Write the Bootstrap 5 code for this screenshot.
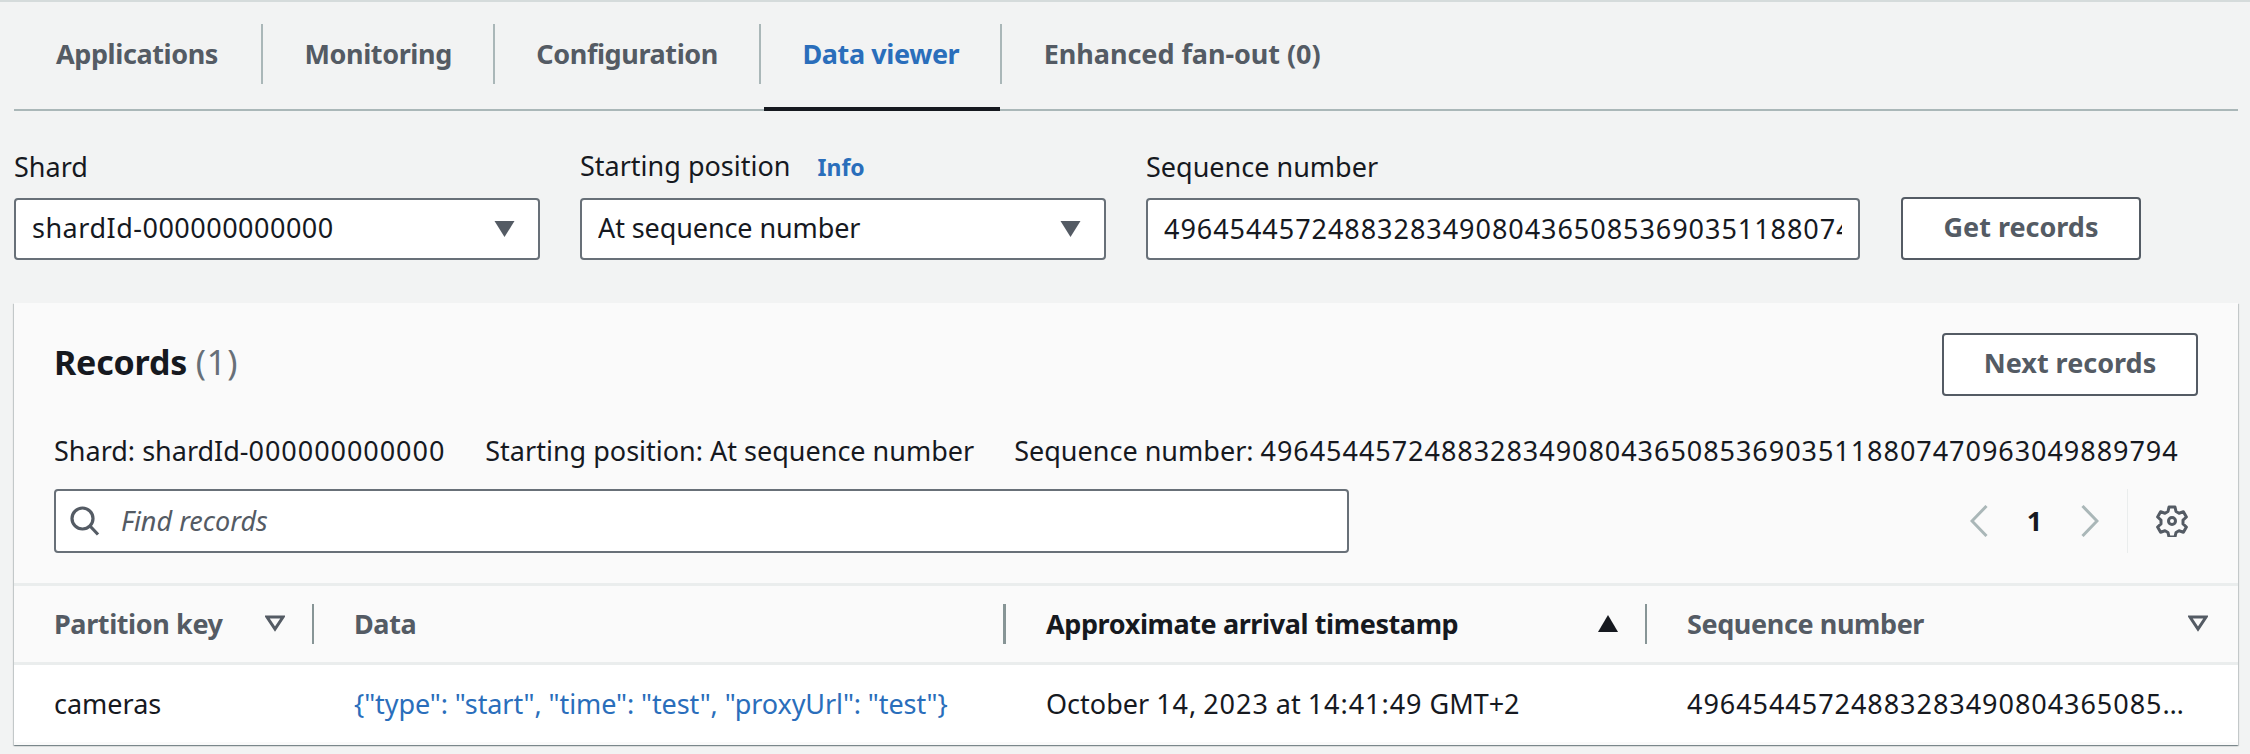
<!DOCTYPE html>
<html lang="en">
<head>
    <meta charset="UTF-8">
    <meta name="viewport" content="width=device-width, initial-scale=1.0">
    <title>Data viewer</title>
    <link href="https://cdn.jsdelivr.net/npm/bootstrap@5.3.0/dist/css/bootstrap.min.css" rel="stylesheet">
    <style>
        html, body {
            height: 754px;
            overflow: hidden;
        }
        body {
            background: #f2f3f3;
            color: #16191f;
            font-family: "Noto Sans", sans-serif;
            font-size: 27px;
            line-height: 40px;
        }
        .page-wrap {
            border-top: 2px solid #d5dbdb;
            padding: 0 12px 0 14px;
        }
        /* digits are wider in the reference than in Noto Sans */
        .num-run {
            letter-spacing: .95px;
        }

        /* tabs */
        .tab-strip {
            height: 109px;
            border-bottom: 2px solid #aab7b8;
            flex-wrap: nowrap;
        }
        .tab-item {
            position: relative;
            display: flex;
            align-items: center;
        }
        .tab-item .nav-link {
            color: #545b64;
            font-weight: 700;
            letter-spacing: -.4px;
            font-size: 27px;
            padding: 0 41px 0 41.5px;
            height: 60px;
            line-height: 60px;
            margin-top: -4px;
            border-right: 2px solid #aab7b8;
        }
        .tab-item:first-child .nav-link {
            padding: 0 43px 0 42px;
        }
        .tab-item:last-child .nav-link {
            border-right: 0;
            letter-spacing: -.05px;
        }
        .tab-item.tab-on .nav-link {
            color: #2a6ebb;
        }
        .tab-item.tab-on::after {
            content: "";
            position: absolute;
            left: 3px;
            right: 2px;
            bottom: -2px;
            height: 4px;
            background: #16191f;
        }

        /* filter row */
        .filter-row {
            margin-top: 35px;
            gap: 40px;
        }
        .field-label {
            display: block;
            line-height: 40px;
            margin-bottom: 11px;
        }
        .info-link {
            color: #2a6ebb;
            font-size: 23px;
            font-weight: 700;
            text-decoration: none;
            margin-left: 20px;
        }
        .aws-select, .aws-input {
            height: 62px;
            border: 2px solid #687078;
            border-radius: 4px;
            color: #16191f;
            font-size: 27px;
            line-height: 40px;
            padding: 8px 16px 10px;
            box-shadow: none;
        }
        .aws-select {
            width: 526px;
            letter-spacing: -.1px;
            background-image: url("data:image/svg+xml,%3Csvg xmlns='http://www.w3.org/2000/svg' viewBox='0 0 20 16'%3E%3Cpath fill='%23545b64' d='M0 0h20L10 16z'/%3E%3C/svg%3E");
            background-size: 21px 16px;
            background-position: right 23px center;
        }
        .shard-select {
            letter-spacing: .5px;
        }
        .seq-input {
            width: 714px;
            letter-spacing: .95px;
        }
        .aws-btn {
            height: 63px;
            border: 2px solid #545b64;
            border-radius: 4px;
            background: #fff;
            color: #545b64;
            font-size: 27px;
            font-weight: 700;
            line-height: 40px;
            padding: 0 0 3px;
            white-space: nowrap;
        }
        .get-btn {
            width: 240px;
            margin-left: 1px;
        }

        /* records panel */
        .records-panel {
            margin-top: 43px;
            height: 442px;
            background: #fafafa;
            border: 0;
            border-radius: 0;
            box-shadow: 0 1px 1px 0 rgba(0, 28, 36, .3), 1px 1px 1px 0 rgba(0, 28, 36, .15), -1px 1px 1px 0 rgba(0, 28, 36, .15);
        }
        .panel-top {
            padding: 30px 40px 0 40px;
            height: 283px;
            border-bottom: 3px solid #eaeded;
        }
        .panel-title {
            font-size: 34px;
            line-height: 58px;
            font-weight: 700;
            letter-spacing: -.2px;
            margin: 0;
        }
        .panel-title span {
            color: #687078;
            font-weight: 400;
            letter-spacing: .95px;
        }
        .next-btn {
            width: 256px;
        }
        .meta-line {
            margin-top: 35px;
            gap: 40px;
            white-space: nowrap;
        }
        .search-row {
            margin-top: 18px;
        }
        .search-box {
            width: 1295px;
            height: 64px;
            background: #fff;
            border: 2px solid #687078;
            border-radius: 4px;
            padding: 0 14px;
            gap: 19px;
        }
        .search-box input {
            border: 0;
            outline: 0;
            flex: 1;
            background: transparent;
            font-size: 27px;
            font-style: italic;
            color: #16191f;
        }
        .search-box input::placeholder {
            color: #545b64;
            opacity: 1;
        }
        .pager-box {
            height: 64px;
            margin-right: 10px;
        }
        .pager-num {
            font-weight: 700;
            width: 93px;
            text-align: center;
        }
        .gear-box {
            border-left: 1px solid #eaeded;
            height: 64px;
            margin-left: 28px;
            padding-left: 28px;
        }

        /* table */
        .rec-table {
            table-layout: fixed;
            width: 2224px;
            margin: 0;
            --bs-table-bg: transparent;
            --bs-table-color: #16191f;
            font-size: 27px;
        }
        .col-a { width: 300px; }
        .col-b { width: 692px; }
        .col-c { width: 641px; }
        .col-d { width: 591px; }
        .rec-table th {
            height: 77px;
            padding: 0;
            color: #545b64;
            font-weight: 700;
            letter-spacing: -.4px;
            border-bottom: 3px solid #eaeded;
            vertical-align: middle;
        }
        .rec-table th.sort-on {
            color: #16191f;
        }
        .rec-table td {
            height: 79px;
            padding: 2px 0 0 40px;
            background: #fff;
            border: 0;
            vertical-align: middle;
            white-space: nowrap;
            overflow: hidden;
            text-overflow: ellipsis;
        }
        .rec-table td:last-child {
            padding-right: 40px;
        }
        .head-cell {
            height: 40px;
            padding: 0 27px 0 40px;
            border-right: 2px solid #879596;
        }
        th:last-child .head-cell {
            border-right: 0;
            padding-right: 30px;
        }
        .thick-rule {
            border-right-width: 3px;
        }
        .rec-table td a {
            color: #2a6ebb;
            text-decoration: none;
            letter-spacing: -.1px;
        }
    </style>
</head>
<body>
    <div class="page-wrap">
        <!-- Tabs -->
        <ul class="nav tab-strip">
            <li class="nav-item tab-item"><a class="nav-link" href="#">Applications</a></li>
            <li class="nav-item tab-item"><a class="nav-link" href="#">Monitoring</a></li>
            <li class="nav-item tab-item"><a class="nav-link" href="#">Configuration</a></li>
            <li class="nav-item tab-item tab-on"><a class="nav-link" href="#">Data viewer</a></li>
            <li class="nav-item tab-item"><a class="nav-link" href="#">Enhanced fan-out (0)</a></li>
        </ul>

        <!-- Filters -->
        <div class="d-flex align-items-end filter-row">
            <div>
                <label class="field-label">Shard</label>
                <select class="form-select aws-select shard-select"><option>shardId-000000000000</option></select>
            </div>
            <div>
                <label class="field-label">Starting position <a class="info-link" href="#">Info</a></label>
                <select class="form-select aws-select"><option>At sequence number</option></select>
            </div>
            <div>
                <label class="field-label">Sequence number</label>
                <input class="form-control aws-input seq-input" type="text" value="49645445724883283490804365085369035118807470963049889794">
            </div>
            <button class="btn aws-btn get-btn" type="button">Get records</button>
        </div>

        <!-- Records -->
        <div class="card records-panel">
            <div class="panel-top">
                <div class="d-flex justify-content-between align-items-start">
                    <h2 class="panel-title">Records <span>(1)</span></h2>
                    <button class="btn aws-btn next-btn" type="button">Next records</button>
                </div>
                <div class="d-flex meta-line">
                    <span>Shard: shardId-<span class="num-run">000000000000</span></span>
                    <span>Starting position: At sequence number</span>
                    <span>Sequence number: <span class="num-run">49645445724883283490804365085369035118807470963049889794</span></span>
                </div>
                <div class="d-flex justify-content-between search-row">
                    <div class="d-flex align-items-center search-box">
                        <svg width="30" height="30" viewBox="0 0 30 30" fill="none" stroke="#545b64" stroke-width="3.2"><circle cx="12.500" cy="12.500" r="10.500"/><path d="M20 20l8 8.500"/></svg>
                        <input type="text" placeholder="Find records">
                    </div>
                    <div class="d-flex align-items-center pager-box">
                        <svg width="18" height="32" viewBox="0 0 18 32" fill="none" stroke="#aab7b8" stroke-width="3"><path d="M16.500 1L2 16l14.500 15"/></svg>
                        <span class="pager-num">1</span>
                        <svg width="18" height="32" viewBox="0 0 18 32" fill="none" stroke="#aab7b8" stroke-width="3"><path d="M1.500 1L16 16 1.500 31"/></svg>
                        <div class="d-flex align-items-center gear-box">
                            <svg width="32" height="32" viewBox="0 0 32 32" fill="none" stroke="#545b64" stroke-width="3" stroke-linejoin="round"><circle cx="16" cy="16" r="3.500"/><path d="M13 2h6l1 4.500 3 1.700 4.400-1.400 3 5.200-3.400 3.100v3.800l3.400 3.100-3 5.200-4.400-1.400-3 1.700-1 4.500h-6l-1-4.500-3-1.700-4.400 1.400-3-5.200 3.400-3.100v-3.800L1.600 12l3-5.200L9 8.200l3-1.700z"/></svg>
                        </div>
                    </div>
                </div>
            </div>

            <table class="table rec-table">
                <colgroup>
                    <col class="col-a"><col class="col-b"><col class="col-c"><col class="col-d">
                </colgroup>
                <thead>
                    <tr>
                        <th>
                            <div class="d-flex justify-content-between align-items-center head-cell">Partition key
                                <svg width="20" height="17" viewBox="0 0 20 17" fill="none" stroke="#545b64" stroke-width="3"><path d="M2 2h16l-8 12z"/></svg>
                            </div>
                        </th>
                        <th>
                            <div class="d-flex align-items-center head-cell thick-rule">Data</div>
                        </th>
                        <th class="sort-on">
                            <div class="d-flex justify-content-between align-items-center head-cell">Approximate arrival timestamp
                                <svg width="20" height="17" viewBox="0 0 20 17"><path fill="#16191f" d="M0 17h20L10 0z"/></svg>
                            </div>
                        </th>
                        <th>
                            <div class="d-flex justify-content-between align-items-center head-cell">Sequence number
                                <svg width="20" height="17" viewBox="0 0 20 17" fill="none" stroke="#545b64" stroke-width="3"><path d="M2 2h16l-8 12z"/></svg>
                            </div>
                        </th>
                    </tr>
                </thead>
                <tbody>
                    <tr>
                        <td>cameras</td>
                        <td><a href="#">{"type": "start", "time": "test", "proxyUrl": "test"}</a></td>
                        <td>October <span class="num-run">14</span>, <span class="num-run">2023</span> at <span class="num-run">14:41:49</span> GMT+2</td>
                        <td class="num-run">49645445724883283490804365085369035118807470963049889794</td>
                    </tr>
                </tbody>
            </table>
        </div>
    </div>
</body>
</html>
